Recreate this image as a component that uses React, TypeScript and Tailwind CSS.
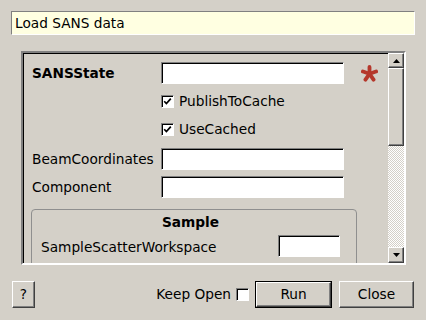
const sunken =
  'border border-t-[#808080] border-l-[#808080] border-b-white border-r-white shadow-[inset_1px_1px_0_#000] bg-white'
const raised =
  'border border-t-white border-l-white border-b-[#404040] border-r-[#404040] shadow-[inset_-1px_-1px_0_#808080] bg-[#d4d0c8]'

const Check = ({ checked }: { checked?: boolean }) => (
  <div className={`h-[13px] w-[13px] shrink-0 ${sunken} flex items-center justify-center`}>
    {checked && (
      <svg width="9" height="9" viewBox="0 0 9 9">
        <path d="M1.2 4.2 L3.4 6.6 L7.8 1.6" fill="none" stroke="#000" strokeWidth="1.7" />
      </svg>
    )}
  </div>
)

const Star = () => (
  <svg width="17" height="17" viewBox="0 0 16 16" className="shrink-0">
    <g stroke="#b5372b" strokeWidth="3.6" strokeLinecap="round">
      <line x1="8" y1="8.3" x2="8" y2="1.8" />
      <line x1="8" y1="8.3" x2="14.2" y2="6.1" />
      <line x1="8" y1="8.3" x2="11.8" y2="13.8" />
      <line x1="8" y1="8.3" x2="4.2" y2="13.8" />
      <line x1="8" y1="8.3" x2="1.8" y2="6.1" />
    </g>
  </svg>
)

const Arrow = ({ down }: { down?: boolean }) => (
  <svg width="7" height="4" viewBox="0 0 7 4">
    <path d={down ? 'M0 0 H7 L3.5 4 Z' : 'M0 4 H7 L3.5 0 Z'} fill="#000" />
  </svg>
)

const App = () => {
  return (
    <div className="flex h-[320px] w-[426px] flex-col overflow-hidden bg-[#d4d0c8] pt-[11px] font-['DejaVu_Sans',sans-serif] text-[13.7px] leading-none text-black">
      <div className="ml-[11px] flex h-[24px] w-[404px] items-center border border-t-[#808080] border-l-[#808080] border-b-white border-r-white bg-[#ffffe1] pl-[3px] pt-[2px]">
        Load SANS data
      </div>

      <div className="ml-[21px] mt-[16px] flex h-[214px] w-[385px] border-2 border-t-[#808080] border-l-[#808080] border-b-white border-r-white shadow-[inset_1px_1px_0_#000]">
        <div className="flex-1 overflow-hidden pl-[9px] pt-[9px]">
          <div className="flex h-[22px] items-center">
            <div className="w-[129px] pt-[2px] font-bold">SANSState</div>
            <div className={`h-[22px] w-[183px] ${sunken}`} />
            <div className="ml-[17px]">
              <Star />
            </div>
          </div>
          <div className="mt-[11px] flex h-[13px] items-center pl-[129px]">
            <Check checked />
            <span className="ml-[5px]">PublishToCache</span>
          </div>
          <div className="mt-[15px] flex h-[13px] items-center pl-[129px]">
            <Check checked />
            <span className="ml-[5px]">UseCached</span>
          </div>
          <div className="mt-[12px] flex h-[22px] items-center">
            <div className="w-[129px] pt-[1px]">BeamCoordinates</div>
            <div className={`h-[22px] w-[183px] ${sunken}`} />
          </div>
          <div className="mt-[6px] flex h-[22px] items-center">
            <div className="w-[129px] pt-[2px]">Component</div>
            <div className={`h-[22px] w-[183px] ${sunken}`} />
          </div>
          <div className="-ml-px mt-[11px] h-[80px] w-[326px] rounded-[4px] border border-[#8f8f8f] pl-[9px] pr-[16px] pt-[4px]">
            <div className="text-center font-bold leading-[17px]">Sample</div>
            <div className="mt-[4px] flex h-[22px] items-center justify-between">
              <span className="pt-[3px]">SampleScatterWorkspace</span>
              <div className={`h-[22px] w-[62px] ${sunken}`} />
            </div>
          </div>
        </div>

        <div className="flex w-[16px] flex-col">
          <div className={`flex h-[15px] items-center justify-center ${raised}`}>
            <Arrow />
          </div>
          <div className={`h-[78px] ${raised}`} />
          <div className="flex-1 bg-[image:repeating-conic-gradient(#ffffff_0%_25%,#d4d0c8_0%_50%)] bg-size-[2px_2px]" />
          <div className={`flex h-[16px] items-center justify-center ${raised}`}>
            <Arrow down />
          </div>
        </div>
      </div>

      <div className="mt-[16px] flex h-[27px] items-center pl-[12px] pr-[12px]">
        <div className={`flex h-[27px] w-[23px] items-center justify-center ${raised}`}>?</div>
        <div className="ml-auto flex items-center">
          <span>Keep Open</span>
          <div className="ml-[5px]">
            <Check />
          </div>
        </div>
        <div className="ml-[6px] h-[27px] w-[77px] border border-black">
          <div className={`flex h-full w-full items-center justify-center ${raised}`}>Run</div>
        </div>
        <div className={`ml-[7px] flex h-[27px] w-[75px] items-center justify-center ${raised}`}>Close</div>
      </div>
    </div>
  )
}

export default App
